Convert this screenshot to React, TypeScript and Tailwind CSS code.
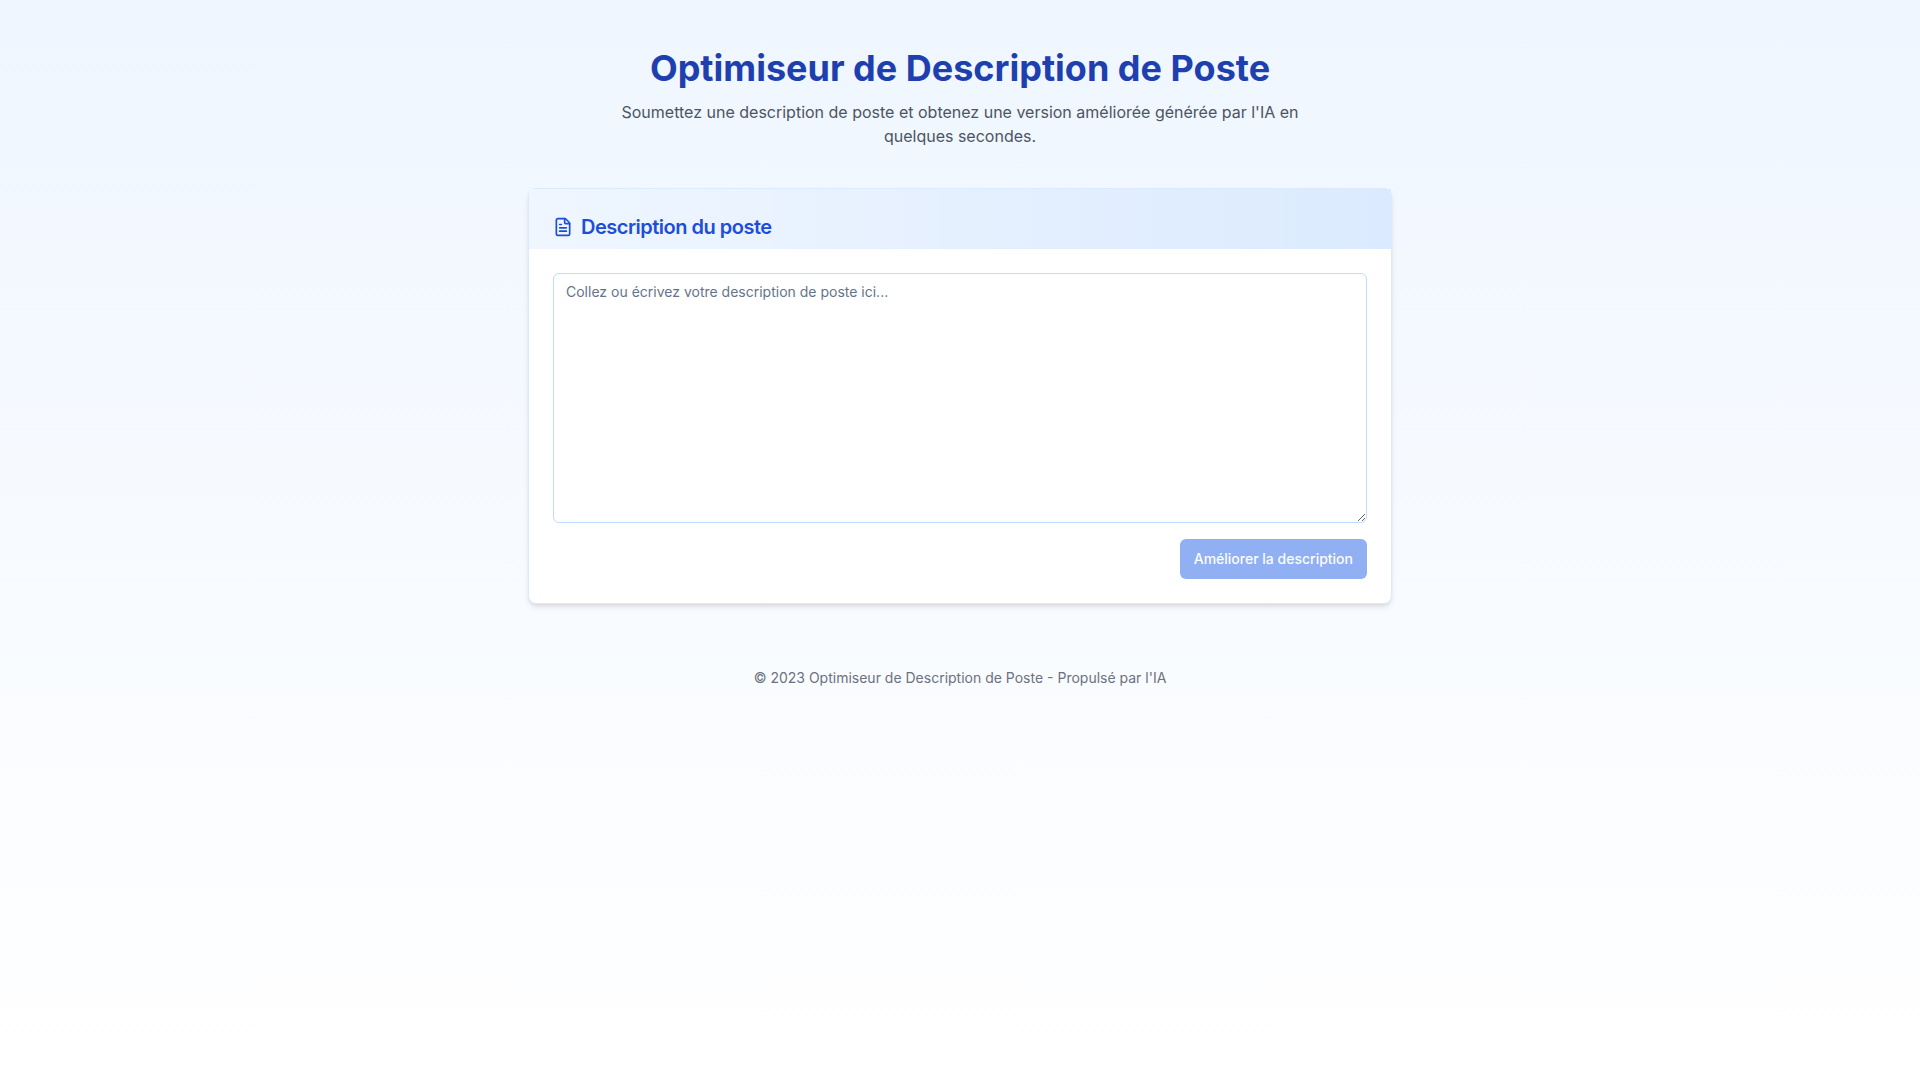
import { useState } from "react";
import { FileText } from "lucide-react";

export default function App() {
  const [description, setDescription] = useState("");

  return (
    <div className="min-h-screen bg-linear-to-b/srgb from-[#eff6ff] to-white font-[Inter,sans-serif] text-[#020817]">
      <div className="max-w-4xl mx-auto px-4 py-12">
        <header className="text-center mb-10">
          <h1 className="text-4xl font-bold text-[#1e40af] mb-3">Optimiseur de Description de Poste</h1>
          <p className="text-[#4b5563] max-w-[684px] mx-auto">
            Soumettez une description de poste et obtenez une version améliorée générée par l'IA en quelques secondes.
          </p>
        </header>

        <main>
          <div className="rounded-lg border border-[#dbeafe] bg-white shadow-md">
            <div className="p-6 pb-2 bg-linear-to-r/srgb from-[#eff6ff] to-[#dbeafe]">
              <h2 className="flex items-center gap-2 text-xl font-semibold tracking-tight text-[#1d4ed8]">
                <FileText className="h-5 w-5" />
                <label htmlFor="description">Description du poste</label>
              </h2>
            </div>
            <div className="p-6">
              <textarea
                id="description"
                value={description}
                onChange={(e) => setDescription(e.target.value)}
                placeholder="Collez ou écrivez votre description de poste ici..."
                className="block w-full min-h-[250px] rounded-md border border-[#bfdbfe] bg-white px-3 py-2 text-sm placeholder:text-[#64748b] resize-y"
              />
              <div className="flex justify-end mt-4">
                <button
                  disabled={!description.trim()}
                  className="h-10 px-3.5 py-2 rounded-md bg-[#2563eb] text-sm font-medium text-[#f8fafc] disabled:opacity-50"
                >
                  Améliorer la description
                </button>
              </div>
            </div>
          </div>
        </main>

        <footer className="mt-16 text-center text-sm text-[#6b7280]">
          <p>© 2023 Optimiseur de Description de Poste - Propulsé par l'IA</p>
        </footer>
      </div>
    </div>
  );
}
